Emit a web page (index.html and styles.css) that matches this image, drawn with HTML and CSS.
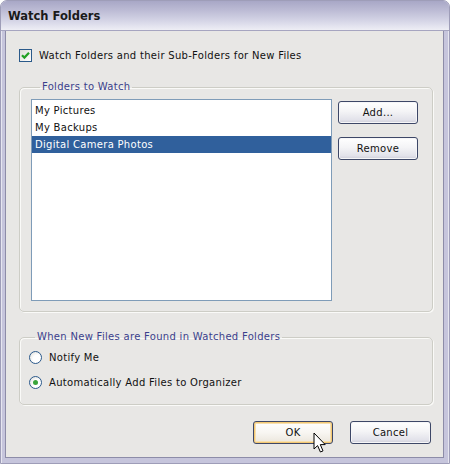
FILE: index.html
```html
<!DOCTYPE html>
<html>
<head>
<meta charset="utf-8">
<link rel="stylesheet" href="styles.css">
</head>
<body>
<div class="window">
  <div class="titlebar"><span class="title">Watch Folders</span></div>
  <div class="client">
    <label class="check-row">
      <span class="checkbox"><svg width="9" height="9" viewBox="0 0 9 9"><path d="M1 4.2 L3.4 6.6 L8 1.8" fill="none" stroke="#22a023" stroke-width="2.2"/></svg></span>
      <span>Watch Folders and their Sub-Folders for New Files</span>
    </label>
    <fieldset class="group group-folders">
      <legend>Folders to Watch</legend>
      <div class="folders-row">
        <ul class="listbox">
          <li>My Pictures</li>
          <li>My Backups</li>
          <li class="selected">Digital Camera Photos</li>
        </ul>
        <div class="side-buttons">
          <button class="btn">Add...</button>
          <button class="btn">Remove</button>
        </div>
      </div>
    </fieldset>
    <fieldset class="group group-options">
      <legend>When New Files are Found in Watched Folders</legend>
      <div class="radio-row"><span class="radio"></span><span>Notify Me</span></div>
      <div class="radio-row"><span class="radio checked"></span><span>Automatically Add Files to Organizer</span></div>
    </fieldset>
    <div class="footer">
      <div class="ok-wrap">
        <button class="btn btn-default">OK</button>
        <svg class="cursor" width="14" height="22" viewBox="0 0 14 22"><path d="M1 1 L1 17 L4.6 13.6 L7.4 20 L10 18.9 L7.3 12.6 L12.2 12.6 Z" fill="#fff" stroke="#000" stroke-width="1" stroke-linejoin="miter"/></svg>
      </div>
      <button class="btn btn-cancel">Cancel</button>
    </div>
  </div>
</div>
</body>
</html>
```

FILE: styles.css
```css
html, body {
  margin: 0;
  padding: 0;
  background: #ffffff;
}
body {
  font-family: "DejaVu Sans", Verdana, sans-serif;
  font-size: 10px;
  letter-spacing: 0.3px;
  color: #111;
}
.window {
  width: 450px;
  height: 464px;
  box-sizing: border-box;
  display: flex;
  flex-direction: column;
  background: #c6c5dc;
  border: 1px solid #9e9db8;
  border-radius: 7px 7px 0 0;
  padding: 0 5px 5px 4px;
  box-shadow: inset 1px 0 0 #e6e6f0, inset -1px 0 0 #e6e6f0;
}
.titlebar {
  height: 29px;
  margin: 0 -5px 0 -4px;
  border-radius: 6px 6px 0 0;
  background: linear-gradient(#a8a7c6 0%, #bebdd6 35%, #d6d6e7 70%, #eeeef5 100%);
  display: flex;
  align-items: center;
  padding-left: 7px;
  border-bottom: 1px solid #a6a5c0;
}
.title {
  font-weight: bold;
  font-size: 11.5px;
  letter-spacing: 0;
  color: #1a1a1a;
}
.client {
  flex: 1;
  background: #e8e7e5;
  border: 1px solid #8d8ca8;
  border-top: none;
  display: flex;
  flex-direction: column;
  padding: 0 10px 0 13px;
}
.check-row {
  display: flex;
  align-items: center;
  gap: 7px;
  margin-top: 17px;
  height: 14px;
}
.checkbox {
  width: 11px;
  height: 11px;
  border: 1px solid #2b5a8a;
  background: linear-gradient(135deg, #dcdcd6, #ffffff);
  display: flex;
  align-items: center;
  justify-content: center;
}
.group {
  margin: 0;
  border: 1px solid #cdcdc6;
  border-radius: 5px;
  box-shadow: 1px 1px 0 #fafaf8 inset, 1px 1px 0 #fafaf8;
}
.group legend {
  color: #3b3f8c;
  padding: 0 2px;
  margin-left: 9px;
  line-height: 12px;
}
.group-folders {
  margin-top: 19px;
  padding: 6px 13px 10px 11px;
}
.folders-row {
  display: flex;
  gap: 6px;
}
.listbox {
  list-style: none;
  margin: 0;
  padding: 2px 0 0 0;
  width: 299px;
  height: 198px;
  background: #ffffff;
  border: 1px solid #7f9cb8;
}
.listbox li {
  height: 17px;
  line-height: 17px;
  padding-left: 3px;
  color: #111;
}
.listbox li.selected {
  background: #30609c;
  color: #ffffff;
}
.side-buttons {
  display: flex;
  flex-direction: column;
  gap: 13px;
  padding-top: 2px;
}
.btn {
  font-family: "DejaVu Sans", Verdana, sans-serif;
  font-size: 10px;
  letter-spacing: 0.3px;
  color: #111;
  width: 80px;
  height: 23px;
  padding: 0;
  border: 1px solid #3d4767;
  border-radius: 3px;
  background: linear-gradient(#ffffff 0%, #f4f4f6 45%, #e2e2ea 85%, #cdcdd8 100%);
  box-shadow: inset 0 0 0 1px #f6f6f8;
}
.group-options {
  margin-top: 19px;
  padding: 2px 8px 9px 6px;
}
.radio-row {
  display: flex;
  align-items: center;
  gap: 7px;
  height: 25px;
}
.radio {
  width: 11px;
  height: 11px;
  border-radius: 50%;
  border: 1px solid #2c5a8c;
  background: radial-gradient(circle at 65% 65%, #ffffff 40%, #dadad4 100%);
  display: flex;
  align-items: center;
  justify-content: center;
  margin-left: 3px;
}
.radio.checked::after {
  content: "";
  width: 5px;
  height: 5px;
  border-radius: 50%;
  background: #3aa53a;
}
.footer {
  display: flex;
  justify-content: flex-end;
  gap: 17px;
  margin-top: 16px;
  margin-right: 2px;
}
.ok-wrap {
  position: relative;
}
.btn-cancel {
  width: 81px;
}
.btn-default {
  border-color: #3d4767;
  box-shadow: inset 0 0 0 1px #f3c873, inset 0 0 0 2px #f7e0b0;
  background: linear-gradient(#ffffff 0%, #f8f6f2 50%, #ebe6dc 100%);
}
.cursor {
  position: absolute;
  left: 60px;
  top: 11px;
}
```
